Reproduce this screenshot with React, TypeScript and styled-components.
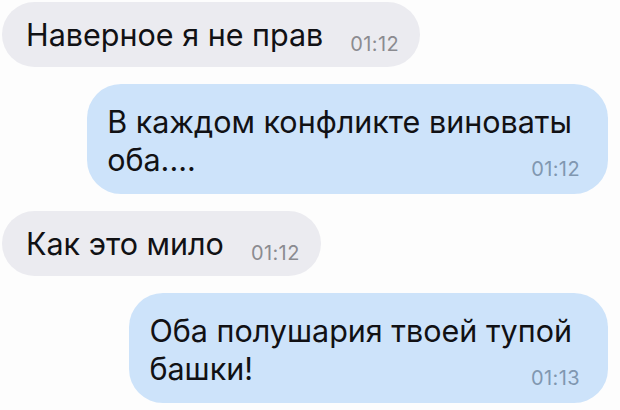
import React from "react";
import styled, { createGlobalStyle } from "styled-components";

const GlobalStyle = createGlobalStyle`
  html, body {
    margin: 0;
    padding: 0;
    background: #fdfdfd;
  }
  body {
    font-family: "Inter", "Noto Sans", "Liberation Sans", sans-serif;
    -webkit-font-smoothing: antialiased;
  }
`;

const Chat = styled.div`
  width: 620px;
  height: 410px;
  box-sizing: border-box;
  padding: 2px 12px 0 2px;
  display: flex;
  flex-direction: column;
  gap: 17px;
  overflow: hidden;
`;

const Bubble = styled.div<{ $out?: boolean }>`
  box-sizing: border-box;
  align-self: ${(p) => (p.$out ? "flex-end" : "flex-start")};
  background: ${(p) => (p.$out ? "#cde3fa" : "#ebebf0")};
  border-radius: ${(p) => (p.$out ? "34px" : "33px")};
  color: #111114;
  ${(p) =>
    p.$out
      ? `
    display: grid;
    padding: 19px 28px 15px 20px;
  `
      : `
    display: flex;
    align-items: flex-end;
    gap: 27px;
    padding: 14px 21px 13px 24px;
  `}
`;

const Text = styled.div<{ $out?: boolean }>`
  grid-area: 1 / 1;
  font-size: 30.5px;
  line-height: 38px;
  white-space: nowrap;
  padding-right: ${(p) => (p.$out ? "8px" : "0")};
`;

const Time = styled.span<{ $out?: boolean }>`
  grid-area: 1 / 1;
  justify-self: end;
  align-self: end;
  font-size: 20px;
  line-height: 20px;
  letter-spacing: 0.4px;
  color: ${(p) => (p.$out ? "#8097b0" : "#8b8b90")};
`;

type Msg = { out?: boolean; lines: string[]; time: string };

const messages: Msg[] = [
  { lines: ["Наверное я не прав"], time: "01:12" },
  { out: true, lines: ["В каждом конфликте виноваты", "оба...."], time: "01:12" },
  { lines: ["Как это мило"], time: "01:12" },
  { out: true, lines: ["Оба полушария твоей тупой", "башки!"], time: "01:13" },
];

export default function App() {
  return (
    <>
      <GlobalStyle />
      <Chat>
        {messages.map((m, i) => (
          <Bubble key={i} $out={m.out}>
            <Text $out={m.out}>
              {m.lines.map((l, j) => (
                <React.Fragment key={j}>
                  {j > 0 && <br />}
                  {l}
                </React.Fragment>
              ))}
            </Text>
            <Time $out={m.out}>{m.time}</Time>
          </Bubble>
        ))}
      </Chat>
    </>
  );
}
